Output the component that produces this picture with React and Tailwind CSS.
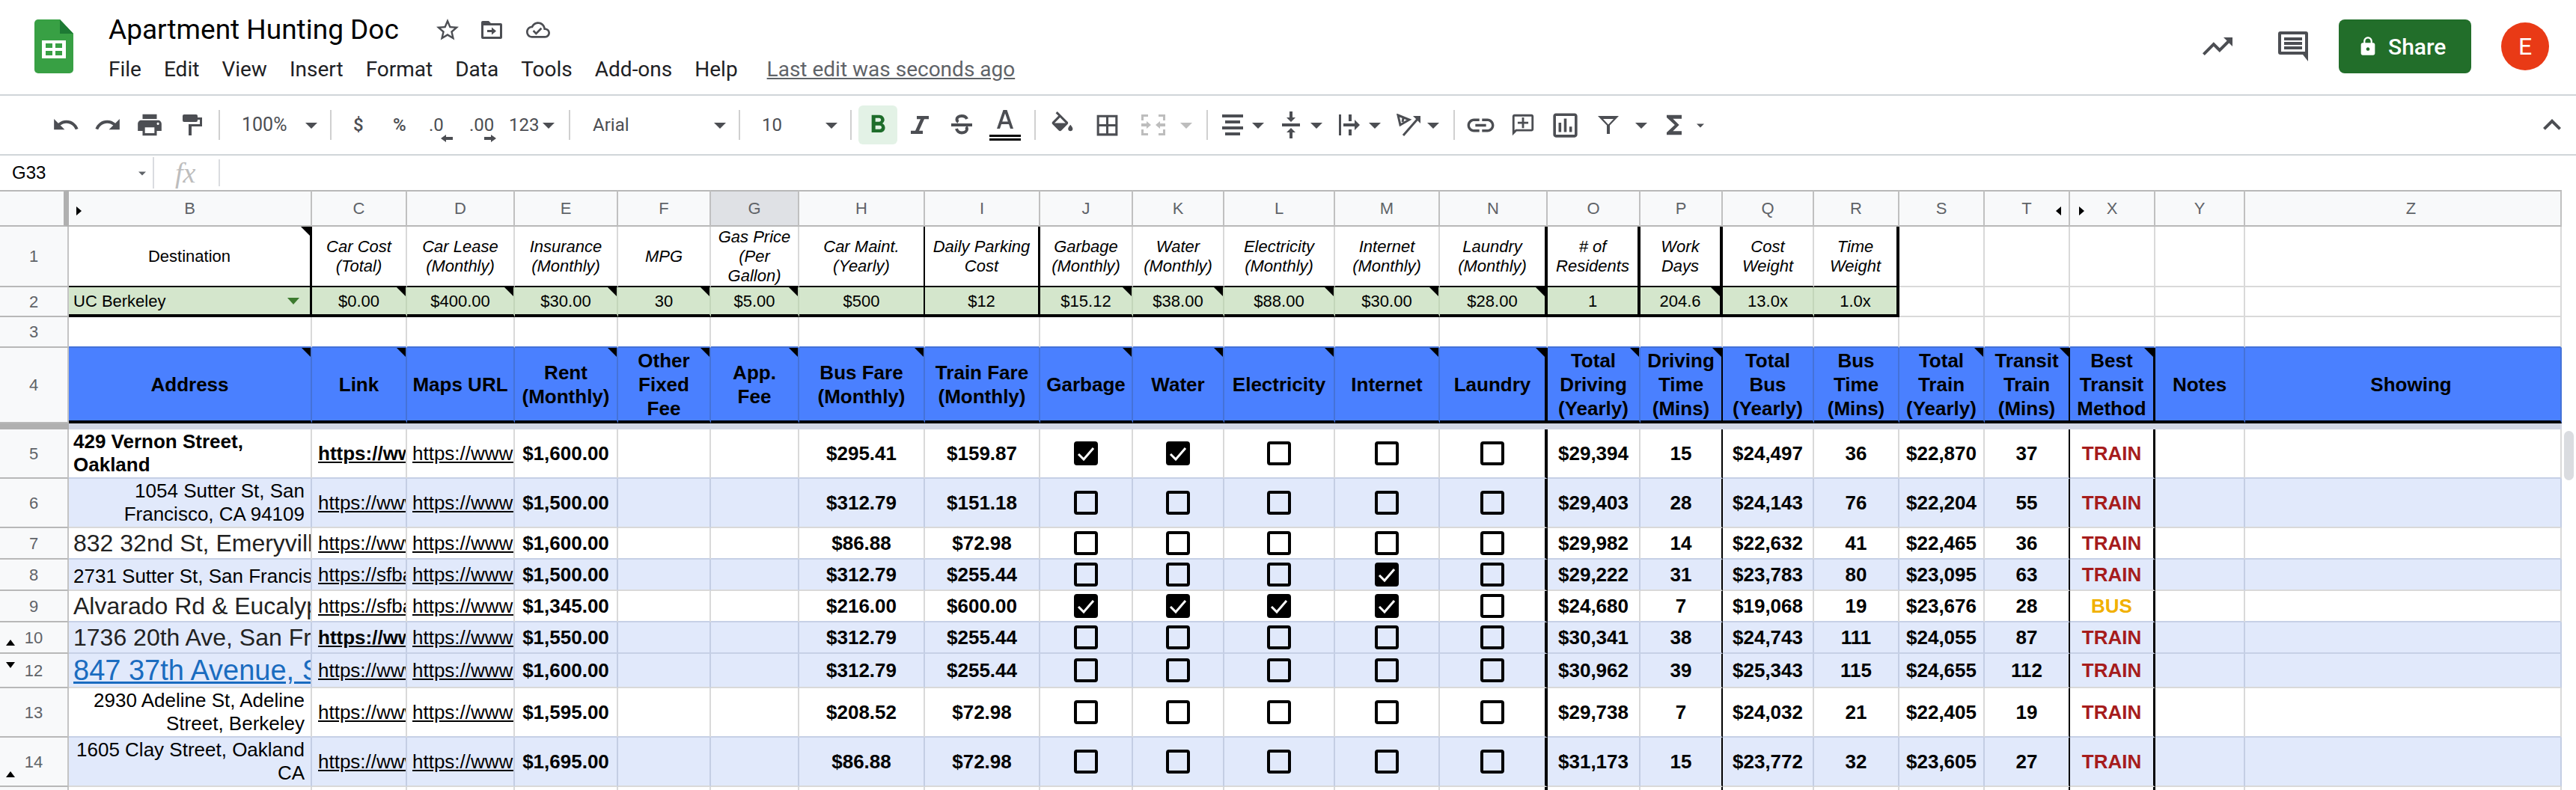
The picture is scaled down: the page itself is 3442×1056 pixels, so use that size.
import React from 'react';

const COLS = ['B', 'C', 'D', 'E', 'F', 'G', 'H', 'I', 'J', 'K', 'L', 'M', 'N', 'O', 'P', 'Q', 'R', 'S', 'T', 'X', 'Y', 'Z'];
const PARAMS = COLS.slice(0, 17);

const ROW1 = {
  B: 'Destination',
  C: 'Car Cost\n(Total)',
  D: 'Car Lease\n(Monthly)',
  E: 'Insurance\n(Monthly)',
  F: 'MPG',
  G: 'Gas Price\n(Per\nGallon)',
  H: 'Car Maint.\n(Yearly)',
  I: 'Daily Parking\nCost',
  J: 'Garbage\n(Monthly)',
  K: 'Water\n(Monthly)',
  L: 'Electricity\n(Monthly)',
  M: 'Internet\n(Monthly)',
  N: 'Laundry\n(Monthly)',
  O: '# of\nResidents',
  P: 'Work\nDays',
  Q: 'Cost\nWeight',
  R: 'Time\nWeight',
};
const ROW2 = {
  C: '$0.00', D: '$400.00', E: '$30.00', F: '30', G: '$5.00', H: '$500', I: '$12', J: '$15.12',
  K: '$38.00', L: '$88.00', M: '$30.00', N: '$28.00', O: '1', P: '204.6', Q: '13.0x', R: '1.0x',
};
const ROW4 = {
  B: 'Address', C: 'Link', D: 'Maps URL', E: 'Rent\n(Monthly)', F: 'Other\nFixed\nFee', G: 'App.\nFee',
  H: 'Bus Fare\n(Monthly)', I: 'Train Fare\n(Monthly)', J: 'Garbage', K: 'Water', L: 'Electricity',
  M: 'Internet', N: 'Laundry', O: 'Total\nDriving\n(Yearly)', P: 'Driving\nTime\n(Mins)',
  Q: 'Total\nBus\n(Yearly)', R: 'Bus\nTime\n(Mins)', S: 'Total\nTrain\n(Yearly)', T: 'Transit\nTrain\n(Mins)',
  X: 'Best\nTransit\nMethod', Y: 'Notes', Z: 'Showing',
};
const CORNER2 = ['C', 'D', 'E', 'F', 'G', 'J', 'K', 'L', 'M', 'N', 'P'];
const CORNER4 = ['B', 'C', 'E', 'F', 'G', 'H', 'J', 'K', 'L', 'M', 'N', 'O', 'P', 'S', 'T', 'X'];

const FRAME1 = {
  B: 'border-r-[3px] border-r-black',
  H: 'border-r-2 border-r-black',
  I: 'border-r-[3px] border-r-black',
  N: 'border-r-[4px] border-r-black',
  O: 'border-r-[4px] border-r-black',
  P: 'border-r-[4px] border-r-black',
  R: 'border-r-[4px] border-r-black',
};
const FRAME4 = {
  N: 'border-r-[4px] border-r-black',
  P: 'border-r-2 border-r-black',
  T: 'border-r-2 border-r-black',
  X: 'border-r-[3px] border-r-black',
};

const link = 'https://www.craigslist.org/apartment';
const sfbay = 'https://sfbay.craigslist.org/apartment';

const DATA = [
  { n: '5', blue: false, next: true, addr: '429 Vernon Street,\nOakland', kind: 'bold', url: link, urlBold: true, rent: '$1,600.00', bus: '$295.41', train: '$159.87', on: 'JK', d: ['$29,394', '15', '$24,497', '36', '$22,870', '37'], best: 'TRAIN' },
  { n: '6', blue: true, next: false, addr: '1054 Sutter St, San\nFrancisco, CA 94109', kind: 'right', url: link, rent: '$1,500.00', bus: '$312.79', train: '$151.18', on: '', d: ['$29,403', '28', '$24,143', '76', '$22,204', '55'], best: 'TRAIN' },
  { n: '7', blue: false, next: true, addr: '832 32nd St, Emeryville, CA', kind: 'large', url: link, rent: '$1,600.00', bus: '$86.88', train: '$72.98', on: '', d: ['$29,982', '14', '$22,632', '41', '$22,465', '36'], best: 'TRAIN' },
  { n: '8', blue: true, next: false, addr: '2731 Sutter St, San Francisco', kind: 'low', url: sfbay, rent: '$1,500.00', bus: '$312.79', train: '$255.44', on: 'M', d: ['$29,222', '31', '$23,783', '80', '$23,095', '63'], best: 'TRAIN' },
  { n: '9', blue: false, next: true, addr: 'Alvarado Rd & Eucalyptus Ave', kind: 'large', url: sfbay, rent: '$1,345.00', bus: '$216.00', train: '$600.00', on: 'JKLM', d: ['$24,680', '7', '$19,068', '19', '$23,676', '28'], best: 'BUS' },
  { n: '10', blue: true, next: true, addr: '1736 20th Ave, San Francisco', kind: 'large', url: link, urlBold: true, rent: '$1,550.00', bus: '$312.79', train: '$255.44', on: '', d: ['$30,341', '38', '$24,743', '111', '$24,055', '87'], best: 'TRAIN', mark: 'up' },
  { n: '12', blue: true, next: false, addr: '847 37th Avenue, San Francisco', kind: 'anchor', url: link, rent: '$1,600.00', bus: '$312.79', train: '$255.44', on: '', d: ['$30,962', '39', '$25,343', '115', '$24,655', '112'], best: 'TRAIN', mark: 'down' },
  { n: '13', blue: false, next: true, addr: '2930 Adeline St, Adeline\nStreet, Berkeley', kind: 'right', url: link, rent: '$1,595.00', bus: '$208.52', train: '$72.98', on: '', d: ['$29,738', '7', '$24,032', '21', '$22,405', '19'], best: 'TRAIN' },
  { n: '14', blue: true, next: false, addr: '1605 Clay Street, Oakland\nCA', kind: 'right', url: link, rent: '$1,695.00', bus: '$86.88', train: '$72.98', on: '', d: ['$31,173', '15', '$23,772', '32', '$23,605', '27'], best: 'TRAIN', mark: 'bottom' },
];

function Caret({ className = 'fill-[#4c4e53]', w = 16, h = 8, ml }) {
  return (
    <svg width={w} height={h} viewBox="0 0 16 8" className={`shrink-0 mt-[2px] ${ml} ${className}`}>
      <path d="M0 0h16L8 8z" />
    </svg>
  );
}

function Icon({ size, d, ml, className = 'fill-[#4c4e53]' }) {
  return (
    <svg width={size} height={size} viewBox="0 0 24 24" className={`shrink-0 ${ml} ${className}`}>
      <path d={d} />
    </svg>
  );
}

function Divider({ ml }) {
  return <div className={`w-[2px] h-[40px] bg-[#d0d0d0] shrink-0 ${ml}`} />;
}

function Tool({ w, ml, children, className = '' }) {
  return <div className={`shrink-0 whitespace-nowrap text-[24px] text-[#4c4e53] ${w} ${ml} ${className}`}>{children}</div>;
}

function TopBar() {
  return (
    <div className="h-[128px] flex border-b-2 border-[#d0d5d9] font-['Roboto',sans-serif]">
      <svg width="52" height="72" viewBox="0 0 52 72" className="shrink-0 ml-[46px] mt-[26px]">
        <path d="M5 0h29l18 19v48a5 5 0 0 1-5 5H5a5 5 0 0 1-5-5V5a5 5 0 0 1 5-5z" fill="#38a044" />
        <path d="M34 0v19h18z" fill="#1d7a34" />
        <path fillRule="evenodd" d="M10 28h32v24H10zM15 32v6h9v-6zM28 32v6h9v-6zM15 42v6h9v-6zM28 42v6h9v-6z" fill="#fff" />
      </svg>
      <div className="ml-[47px] flex flex-col">
        <div className="flex items-center mt-[18px] h-[44px]">
          <div className="w-[384px] text-[37px] leading-[44px] whitespace-nowrap text-black">Apartment Hunting Doc</div>
          <Icon ml="ml-[51px]" size={36} d="M22 9.24l-7.19-.62L12 2 9.19 8.63 2 9.24l5.46 4.73L5.82 21 12 17.27 18.18 21l-1.63-7.03L22 9.24zM12 15.4l-3.76 2.27 1-4.28-3.32-2.88 4.38-.38L12 6.1l1.71 4.04 4.38.38-3.32 2.88 1 4.28L12 15.4z" />
          <svg width="28" height="24" viewBox="0 0 28 24" className="shrink-0 ml-[27px] fill-[#4c4e53]">
            <path fillRule="evenodd" d="M2 0h8l3 3h13a2 2 0 0 1 2 2v17a2 2 0 0 1-2 2H2a2 2 0 0 1-2-2V2a2 2 0 0 1 2-2zM3 6v15h22V6z" />
            <path d="M8 12h6V8.500l6 5-6 5V15H8z" />
          </svg>
          <Icon ml="ml-[32px]" size={32} d="M19.35 10.04C18.67 6.59 15.64 4 12 4 9.110 4 6.600 5.640 5.350 8.040 2.340 8.360 0 10.910 0 14c0 3.310 2.690 6 6 6h13c2.760 0 5-2.240 5-5 0-2.640-2.050-4.780-4.650-4.960zM19 18H6c-2.210 0-4-1.790-4-4 0-2.050 1.530-3.760 3.560-3.970l1.070-.11.5-.95C8.080 7.140 9.940 6 12 6c2.620 0 4.880 1.860 5.390 4.430l.3 1.500 1.530.11c1.560.1 2.780 1.410 2.780 2.960 0 1.650-1.350 3-3 3zm-9-3.820l-2.090-2.090L6.500 13.500 10 17l6.010-6.010-1.410-1.410z" />
        </div>
        <div className="flex items-center gap-[30px] mt-[15px] text-[28px] leading-[32px] text-[#202124] whitespace-nowrap">
          <span>File</span>
          <span>Edit</span>
          <span>View</span>
          <span>Insert</span>
          <span>Format</span>
          <span>Data</span>
          <span>Tools</span>
          <span>Add-ons</span>
          <span>Help</span>
          <span className="ml-[9px] text-[#5f6368] underline">Last edit was seconds ago</span>
        </div>
      </div>
      <div className="ml-auto flex items-center pr-[36px] pb-[2px]">
        <Icon size={48} d="M16 6l2.290 2.290-4.880 4.880-4-4L2 16.590 3.410 18l6-6 4 4 6.300-6.290L22 12V6z" />
        <svg width="40" height="40" viewBox="0 0 40 40" className="shrink-0 ml-[57px] fill-[#4c4e53]">
          <path fillRule="evenodd" d="M3 0h34a3 3 0 0 1 3 3v37l-7-9H3a3 3 0 0 1-3-3V3a3 3 0 0 1 3-3zM4 4v23h32V4z" />
          <path d="M8 8h24v4H8zM8 14h24v4H8zM8 20h24v4H8z" />
        </svg>
        <div className="ml-[41px] w-[177px] h-[72px] rounded-[8px] bg-[#226e2a] flex items-center text-white">
          <Icon ml="ml-[25px]" size={28} className="fill-white" d="M18 8h-1V6c0-2.760-2.240-5-5-5S7 3.240 7 6v2H6c-1.100 0-2 .9-2 2v10c0 1.100.9 2 2 2h12c1.100 0 2-.9 2-2V10c0-1.100-.9-2-2-2zm-6 9c-1.100 0-2-.9-2-2s.9-2 2-2 2 .9 2 2-.9 2-2 2zm3.100-9H8.900V6c0-1.710 1.390-3.100 3.100-3.100 1.710 0 3.100 1.390 3.100 3.100v2z" />
          <span className="ml-[13px] text-[30px] font-medium">Share</span>
        </div>
        <div className="ml-[40px] w-[64px] h-[64px] rounded-full bg-[#e93a16] text-white text-[32px] flex items-center justify-center">E</div>
      </div>
    </div>
  );
}

function Toolbar() {
  return (
    <div className="h-[80px] flex items-center border-b-2 border-[#d0d5d9] font-['Roboto',sans-serif]">
      <Icon ml="ml-[69px]" size={38} d="M12.500 8c-2.650 0-5.050.99-6.900 2.600L2 7v9h9l-3.620-3.620c1.390-1.160 3.160-1.880 5.120-1.880 3.540 0 6.550 2.310 7.600 5.500l2.370-.78C21.080 11.030 17.150 8 12.500 8z" />
      <Icon ml="ml-[18px]" size={38} d="M18.400 10.600C16.550 8.990 14.150 8 11.500 8c-4.650 0-8.580 3.030-9.960 7.220L3.900 16c1.050-3.190 4.050-5.500 7.600-5.500 1.950 0 3.730.72 5.120 1.880L13 16h9V7l-3.600 3.600z" />
      <Icon ml="ml-[18px]" size={38} d="M19 8H5c-1.660 0-3 1.340-3 3v6h4v4h12v-4h4v-6c0-1.660-1.340-3-3-3zm-3 11H8v-5h8v5zm3-7c-.55 0-1-.45-1-1s.45-1 1-1 1 .45 1 1-.45 1-1 1zm-1-9H6v4h12V3z" />
      <svg width="26" height="28" viewBox="0 0 26 28" className="shrink-0 ml-[25px] fill-[#4c4e53]">
        <rect width="20" height="10" rx="2" />
        <path d="M20 4h6v12H12v12H8V13h15V7h-3z" />
      </svg>
      <Divider ml="ml-[22px]" />
      <Tool w="w-[60px]" ml="ml-[29px]" className="text-[25px]">100%</Tool>
      <Caret ml="ml-[25px]" />
      <Divider ml="ml-[17px]" />
      <Tool w="w-[14px]" ml="ml-[29px]" className="font-medium">$</Tool>
      <Tool w="w-[20px]" ml="ml-[39px]" className="font-medium">%</Tool>
      <div className="w-[22px] ml-[28px] shrink-0 mt-[10px] flex flex-col">
        <span className="text-[24px] leading-[26px] text-[#4c4e53] whitespace-nowrap">.0</span>
        <svg width="16" height="10" viewBox="0 0 16 10" className="shrink-0 ml-[16px] fill-[#4c4e53]">
          <path d="M0 5l7-5v3h9v4H7v3z" />
        </svg>
      </div>
      <div className="w-[34px] ml-[32px] shrink-0 mt-[10px] flex flex-col">
        <span className="text-[24px] leading-[26px] text-[#4c4e53] whitespace-nowrap">.00</span>
        <svg width="16" height="10" viewBox="0 0 16 10" className="shrink-0 ml-[20px] fill-[#4c4e53]">
          <path d="M16 5L9 0v3H0v4h9v3z" />
        </svg>
      </div>
      <Tool w="w-[40px]" ml="ml-[19px]">123</Tool>
      <Caret ml="ml-[5px]" />
      <Divider ml="ml-[19px]" />
      <Tool w="w-[50px]" ml="ml-[30px]">Arial</Tool>
      <Caret ml="ml-[112px]" />
      <Divider ml="ml-[17px]" />
      <Tool w="w-[28px]" ml="ml-[29px]">10</Tool>
      <Caret ml="ml-[57px]" />
      <Divider ml="ml-[17px]" />
      <div className="ml-[9px] w-[52px] h-[52px] rounded-[6px] bg-[#e3f2e6] shrink-0 flex items-center justify-center">
        <Icon size={40} className="fill-[#1e6d2b]" d="M15.600 10.790c.97-.67 1.650-1.770 1.650-2.790 0-2.260-1.750-4-4-4H7v14h7.040c2.090 0 3.710-1.700 3.710-3.790 0-1.520-.86-2.820-2.150-3.420zM10 6.500h3c.83 0 1.500.67 1.500 1.500s-.67 1.500-1.500 1.500h-3v-3zm3.500 9H10v-3h3.500c.83 0 1.500.67 1.500 1.500s-.67 1.500-1.500 1.500z" />
      </div>
      <svg width="24" height="24" viewBox="6 4 12 14" preserveAspectRatio="none" className="shrink-0 ml-[18px] fill-[#4c4e53]">
        <path d="M10 4v2.500h2.500L9 15.500H6V18h8v-2.500h-2.500L15 6.500h3V4z" />
      </svg>
      <svg width="28" height="30" viewBox="0 0 28 30" className="shrink-0 ml-[30px]">
        <path d="M21 7c-1-2.500-3.500-4-7-4-4 0-6.500 2-6.500 4.500 0 1.500.7 2.800 2 3.500M7 20c.8 3 3.500 5.500 7 5.500 4 0 7-2 7-5 0-1.200-.4-2.200-1.200-3" fill="none" stroke="#4c4e53" strokeWidth="4" />
        <path d="M0 13h28v4H0z" fill="#4c4e53" />
      </svg>
      <div className="ml-[23px] w-[42px] shrink-0 flex flex-col items-center">
        <svg width="22" height="26" viewBox="0 0 22 26" className="fill-[#4c4e53]">
          <path fillRule="evenodd" d="M8.500 0h5L22 25h-4l-2-6H6l-2 6H0zM7.200 15.500h7.600L11 4.500z" />
        </svg>
        <div className="w-[42px] h-[8px] mt-[7px] border-y-[3px] border-black" />
      </div>
      <Divider ml="ml-[18px]" />
      <Icon ml="ml-[17px]" size={37} d="M16.560 8.940L7.620 0 6.210 1.410l2.380 2.380-5.150 5.150c-.59.59-.59 1.540 0 2.120l5.500 5.500c.29.29.68.44 1.060.44s.77-.15 1.060-.44l5.500-5.500c.59-.58.59-1.530 0-2.120zM5.210 10L10 5.210 14.790 10H5.210zM19 11.500s-2 2.170-2 3.500c0 1.100.9 2 2 2s2-.9 2-2c0-1.330-2-3.500-2-3.500z" />
      <Icon ml="ml-[23px]" size={37} d="M3 3v18h18V3H3zm8 16H5v-6h6v6zm0-8H5V5h6v6zm8 8h-6v-6h6v6zm0-8h-6V5h6v6z" />
      <svg width="32" height="28" viewBox="0 0 32 28" className="shrink-0 ml-[27px] fill-[#bdbdbd]">
        <path d="M0 0h9v3H3v5H0zM23 0h9v8h-3V3h-6zM0 20h3v5h6v3H0zM29 20h3v8h-9v-3h6zM0 12h7V9l6 5-6 5v-3H0zM32 12h-7V9l-6 5 6 5v-3h7z" />
      </svg>
      <Caret ml="ml-[20px]" className="fill-[#bdbdbd]" />
      <Divider ml="ml-[19px]" />
      <svg width="28" height="28" viewBox="0 0 28 28" className="shrink-0 ml-[19px] fill-[#4c4e53]">
        <path d="M0 0h28v4H0zM4 8h20v4H4zM0 16h28v4H0zM4 24h20v4H4z" />
      </svg>
      <Caret ml="ml-[12px]" />
      <svg width="24" height="36" viewBox="0 0 24 36" className="shrink-0 ml-[24px] fill-[#4c4e53]">
        <path d="M10 0h4v8h4l-6 6-6-6h4zM0 16h24v4H0zM12 22l6 6h-4v8h-4v-8H6z" />
      </svg>
      <Caret ml="ml-[14px]" />
      <svg width="28" height="28" viewBox="0 0 28 28" className="shrink-0 ml-[22px] fill-[#4c4e53]">
        <path d="M0 0h3v28H0zM13 0h4v9h-4zM13 20h4v8h-4zM6 12h15V7l7 7-7 7v-5H6z" />
      </svg>
      <Caret ml="ml-[12px]" />
      <svg width="32" height="30" viewBox="0 0 32 30" className="shrink-0 ml-[21px]">
        <path d="M2 2l15 6-12 7zM9 6l-1 5M9 29L30 5" fill="none" stroke="#4c4e53" strokeWidth="3" />
        <path d="M22 3h10v10z" fill="#4c4e53" />
      </svg>
      <Caret ml="ml-[9px]" />
      <Divider ml="ml-[19px]" />
      <Icon ml="ml-[13px]" size={43} d="M3.900 12c0-1.710 1.390-3.100 3.100-3.100h4V7H7c-2.760 0-5 2.240-5 5s2.240 5 5 5h4v-1.900H7c-1.710 0-3.100-1.390-3.100-3.100zM8 13h8v-2H8v2zm9-6h-4v1.900h4c1.710 0 3.100 1.390 3.100 3.100s-1.390 3.100-3.100 3.100h-4V17h4c2.760 0 5-2.240 5-5s-2.240-5-5-5z" />
      <Icon ml="ml-[18px]" size={34} d="M20 2H4c-1.100 0-2 .9-2 2v18l4-4h14c1.100 0 2-.9 2-2V4c0-1.100-.9-2-2-2zm0 14H5.170L4 17.170V4h16v12zM13 5h-2v4H7v2h4v4h2v-4h4V9h-4z" />
      <Icon ml="ml-[18px]" size={43} d="M9 17H7v-7h2v7zm4 0h-2V7h2v10zm4 0h-2v-4h2v4zm2 2H5V5h14v14zm0-16H5c-1.100 0-2 .9-2 2v14c0 1.100.9 2 2 2h14c1.100 0 2-.9 2-2V5c0-1.100-.9-2-2-2z" />
      <svg width="28" height="24" viewBox="0 0 28 24" className="shrink-0 ml-[22px] fill-[#4c4e53]">
        <path fillRule="evenodd" d="M0 0h28L16 12.500V24h-4V12.500zM7 4l7 7.500L21 4z" />
      </svg>
      <Caret ml="ml-[22px]" />
      <Icon ml="ml-[16px]" size={40} d="M18 4H6v2l6.500 6L6 18v2h12v-3h-7l5-5-5-5h7z" />
      <Caret ml="ml-[10px]" w={10} h={6} />
      <Icon ml="ml-auto" size={48} d="M12 8l-6 6 1.410 1.410L12 10.830l4.590 4.580L18 14z" />
      <div className="w-[8px] shrink-0" />
    </div>
  );
}

function FormulaBar() {
  return (
    <div className="h-[46px] flex items-center font-['Liberation_Sans',sans-serif]">
      <span className="ml-[16px] w-[46px] text-[24px] text-black">G33</span>
      <Caret ml="ml-[123px]" w={10} h={6} className="fill-[#5f6368]" />
      <div className="ml-[9px] w-[2px] h-[42px] bg-[#dadce0]" />
      <span className="ml-[28px] w-[36px] font-['Liberation_Serif',serif] italic text-[38px] leading-[42px] text-[#bdbdbd]">fx</span>
      <div className="ml-[22px] w-[2px] h-[36px] bg-[#dadce0]" />
    </div>
  );
}

function Cell({ className = '', corner, children }) {
  return (
    <div className={`relative overflow-hidden flex items-center min-w-0 ${className}`}>
      {corner && <div className="absolute top-0 right-0 w-0 h-0 border-t-[12px] border-l-[12px] border-t-black border-l-transparent" />}
      {children}
    </div>
  );
}

function RowHead({ n, mark, className = '' }) {
  return (
    <Cell className={`justify-center bg-[#f8f9fa] text-[22px] text-[#5f6368] border-r-2 border-b-2 border-r-[#c4c4c4] border-b-[#b8b8b8] ${className}`}>
      {n}
      {mark === 'up' && <svg width="12" height="8" viewBox="0 0 12 8" className="absolute left-[8px] bottom-[9px] fill-black"><path d="M6 0l6 8H0z" /></svg>}
      {mark === 'down' && <svg width="12" height="8" viewBox="0 0 12 8" className="absolute left-[8px] top-[11px] fill-black"><path d="M0 0h12L6 8z" /></svg>}
      {mark === 'bottom' && <svg width="12" height="8" viewBox="0 0 12 8" className="absolute left-[8px] bottom-[11px] fill-black"><path d="M6 0l6 8H0z" /></svg>}
    </Cell>
  );
}

function HeaderRow() {
  return (
    <>
      <div className="bg-[#f8f9fa] border-t-2 border-t-[#b8b8b8] border-b-2 border-b-[#b8b8b8] border-r-[7px] border-r-[#b0b0b0]" />
      {COLS.map((c) => (
        <Cell
          key={c}
          className={`justify-center text-[22px] text-[#5f6368] border-t-2 border-t-[#b8b8b8] border-b-2 border-b-[#b8b8b8] border-r-2 border-r-[#c0c0c0] ${c === 'G' ? 'bg-[#dfe1e5]' : 'bg-[#f8f9fa]'} ${c === 'Z' ? 'pl-[22px]' : ''}`}
        >
          {c}
          {c === 'B' && <svg width="7" height="12" viewBox="0 0 7 12" className="absolute left-[10px] top-[20px] fill-black"><path d="M0 0l7 6-7 6z" /></svg>}
          {c === 'T' && <svg width="7" height="12" viewBox="0 0 7 12" className="absolute right-[10px] top-[20px] fill-black"><path d="M7 0L0 6l7 6z" /></svg>}
          {c === 'X' && <svg width="7" height="12" viewBox="0 0 7 12" className="absolute left-[12px] top-[20px] fill-black"><path d="M0 0l7 6-7 6z" /></svg>}
        </Cell>
      ))}
    </>
  );
}

function ParamRows() {
  return (
    <>
      <RowHead n="1" />
      {COLS.map((c) => {
        const inFrame = PARAMS.includes(c);
        return (
          <Cell
            key={c}
            corner={c === 'B'}
            className={`justify-center text-center whitespace-pre-line text-[22px] leading-[26px] text-black bg-white ${c === 'B' ? '' : 'italic'} border-r-2 border-r-[#d9d9d9] border-b-2 ${inFrame ? 'border-b-black' : 'border-b-[#d9d9d9]'} ${FRAME1[c] || ''}`}
          >
            {ROW1[c]}
          </Cell>
        );
      })}
      <RowHead n="2" />
      {COLS.map((c) => {
        const inFrame = PARAMS.includes(c);
        return (
          <Cell
            key={c}
            corner={CORNER2.includes(c)}
            className={`text-[22px] text-black border-r-2 ${inFrame ? 'bg-[#d4e6cc] border-r-[#c3d6ba] border-b-[4px] border-b-black' : 'bg-white border-r-[#d9d9d9] border-b-2 border-b-[#d9d9d9]'} ${FRAME1[c] || ''} ${c === 'B' ? 'pl-[6px] justify-between pr-[14px]' : 'justify-center'}`}
          >
            {c === 'B' ? (
              <>
                <span>UC Berkeley</span>
                <svg width="16" height="9" viewBox="0 0 16 9" className="fill-[#3c7a2e]"><path d="M0 0h16L8 9z" /></svg>
              </>
            ) : (
              ROW2[c]
            )}
          </Cell>
        );
      })}
      <RowHead n="3" />
      {COLS.map((c) => (
        <div key={c} className="bg-white border-r-2 border-r-[#d9d9d9] border-b-2 border-b-[#4472d8]" />
      ))}
    </>
  );
}

function TitleRow() {
  return (
    <>
      <RowHead n="4" />
      {COLS.map((c) => (
        <Cell
          key={c}
          corner={CORNER4.includes(c)}
          className={`justify-center text-center whitespace-pre-line text-[26px] leading-[32px] font-bold text-black bg-[#4a80ff] border-r-2 border-r-[#4472d8] border-b-[4px] border-b-black ${FRAME4[c] || ''} ${c === 'Z' ? 'pl-[22px]' : ''}`}
        >
          {ROW4[c]}
        </Cell>
      ))}
    </>
  );
}

function Address({ row }) {
  const { addr, kind } = row;
  if (kind === 'bold') return <span className="pl-[6px] font-bold text-[26px] leading-[31px] whitespace-pre-line">{addr}</span>;
  if (kind === 'right') return <span className="w-full pr-[8px] text-right text-[26px] leading-[31px] whitespace-pre-line">{addr}</span>;
  if (kind === 'low') return <span className="pl-[6px] self-end text-[26px] leading-[36px] whitespace-nowrap">{addr}</span>;
  if (kind === 'anchor') return <span className="pl-[6px] text-[38px] leading-[44px] whitespace-nowrap underline text-[#1a6cc0]">{addr}</span>;
  return <span className="pl-[6px] text-[32px] leading-[38px] whitespace-nowrap text-[#222]">{addr}</span>;
}

function Check({ on }) {
  return (
    <div className={`w-[32px] h-[32px] rounded-[4px] border-[4px] border-black flex items-center justify-center ${on ? 'bg-black' : ''}`}>
      {on && (
        <svg width="24" height="24" viewBox="0 0 24 24" className="shrink-0">
          <path d="M2 13l7 7L22 5" fill="none" stroke="#fff" strokeWidth="3" />
        </svg>
      )}
    </div>
  );
}

function DataRow({ row }) {
  const edge = `border-r-2 border-b-2 ${row.blue ? 'bg-[#e1e9fb] border-r-[#c4cee4]' : 'bg-white border-r-[#d9d9d9]'} ${row.next ? 'border-b-[#c6d0e6]' : 'border-b-[#d9d9d9]'}`;
  const body = (c) => {
    if (c === 'B') return <Address row={row} />;
    if (c === 'C') return <span className={`pl-[8px] whitespace-nowrap underline ${row.urlBold ? 'font-bold' : ''}`}>{row.url}</span>;
    if (c === 'D') return <span className="pl-[7px] whitespace-nowrap underline">https://www.google.com/maps</span>;
    if (c === 'E') return <span className="w-full text-center font-bold">{row.rent}</span>;
    if (c === 'H') return <span className="w-full text-center font-bold">{row.bus}</span>;
    if (c === 'I') return <span className="w-full text-center font-bold">{row.train}</span>;
    if ('JKLMN'.includes(c)) return <div className="w-full flex justify-center"><Check on={row.on.includes(c)} /></div>;
    const i = 'OPQRST'.indexOf(c);
    if (i >= 0) return <span className="w-full text-center font-bold">{row.d[i]}</span>;
    if (c === 'X') return <span className={`w-full text-center font-bold ${row.best === 'BUS' ? 'text-[#f1b000]' : 'text-[#a61c1c]'}`}>{row.best}</span>;
    return null;
  };
  return (
    <>
      <RowHead n={row.n} mark={row.mark} />
      {COLS.map((c) => (
        <Cell key={c} className={`text-[26px] text-black ${edge} ${FRAME4[c] || ''}`}>
          {body(c)}
        </Cell>
      ))}
    </>
  );
}

function Sheet() {
  return (
    <div className="flex flex-1 min-h-0 font-['Liberation_Sans',sans-serif]">
      <div className="w-[3423px] h-[802px] grid grid-cols-[92px_325px_127px_144px_138px_124px_118px_168px_154px_124px_122px_148px_140px_144px_124px_110px_122px_114px_114px_114px_114px_120px_423px] grid-rows-[49px_81px_40px_41px_101px_8px_66px_66px_42px_42px_42px_42px_46px_66px_66px_4px]">
        <HeaderRow />
        <ParamRows />
        <TitleRow />
        <div className="bg-[#b0b0b0]" />
        <div className="col-span-22 bg-[#d3d8e6]" />
        {DATA.map((row) => (
          <DataRow key={row.n} row={row} />
        ))}
        <div className="bg-[#f8f9fa] border-r-2 border-r-[#c4c4c4]" />
        {COLS.map((c) => (
          <div key={c} className={`bg-white border-r-2 border-r-[#d9d9d9] ${FRAME4[c] || ''}`} />
        ))}
      </div>
      <div className="w-[19px] pt-[322px] pl-[3px] bg-white">
        <div className="w-[13px] h-[66px] rounded-full bg-[#dadce0]" />
      </div>
    </div>
  );
}

export default function App() {
  return (
    <div className="w-[3442px] h-[1056px] overflow-hidden flex flex-col bg-white">
      <TopBar />
      <Toolbar />
      <FormulaBar />
      <Sheet />
    </div>
  );
}
